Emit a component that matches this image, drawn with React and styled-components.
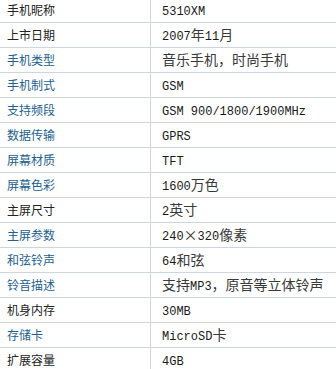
import React from "react";
import styled, { createGlobalStyle } from "styled-components";

const GlobalStyle = createGlobalStyle`
  html, body {
    margin: 0;
    padding: 0;
    background: #ffffff;
  }
  body {
    font-family: "Noto Sans CJK SC", "Liberation Sans", sans-serif;
    overflow: hidden;
  }
`;

const specs = [
  { label: "手机昵称", value: "5310XM", link: false },
  { label: "上市日期", value: "2007年11月", link: false },
  { label: "手机类型", value: "音乐手机，时尚手机", link: true },
  { label: "手机制式", value: "GSM", link: true },
  { label: "支持频段", value: "GSM 900/1800/1900MHz", link: true },
  { label: "数据传输", value: "GPRS", link: true },
  { label: "屏幕材质", value: "TFT", link: true },
  { label: "屏幕色彩", value: "1600万色", link: true },
  { label: "主屏尺寸", value: "2英寸", link: false },
  { label: "主屏参数", value: "240×320像素", link: true },
  { label: "和弦铃声", value: "64和弦", link: true },
  { label: "铃音描述", value: "支持MP3，原音等立体铃声", link: true },
  { label: "机身内存", value: "30MB", link: false },
  { label: "存储卡", value: "MicroSD卡", link: true },
  { label: "扩展容量", value: "4GB", link: false },
];

// split a value into ascii runs and the rest, so latin text gets the narrow mono face
function splitRuns(text) {
  return text.match(/[\x20-\x7e]+|[^\x20-\x7e]+/g) || [];
}

function Value({ text }) {
  return (
    <ValueCell>
      {splitRuns(text).map((run, id) =>
        /^[\x20-\x7e]+$/.test(run) ? (
          <Latin key={id}>{run}</Latin>
        ) : (
          <span key={id}>{run}</span>
        )
      )}
    </ValueCell>
  );
}

function App() {
  return (
    <>
      <GlobalStyle />
      <SpecTable>
        {specs.map((row, id) => (
          <Row key={id}>
            <Label $link={row.link}>{row.label}</Label>
            <Value text={row.value} />
          </Row>
        ))}
      </SpecTable>
    </>
  );
}

export default App;

const SpecTable = styled.div`
  margin-top: -3px;
  width: 100%;
  border-top: 1px solid #cdd6df;
`;

const Row = styled.div`
  display: grid;
  grid-template-columns: 151px 1fr;
  height: 25px;
  box-sizing: border-box;
  border-bottom: 1px solid #cdd6df;
`;

const Label = styled.div`
  padding-left: 7px;
  border-right: 1px solid #cdd6df;
  font-size: 12px;
  line-height: 23px;
  color: ${(p) => (p.$link ? "#22618f" : "#222222")};
`;

const ValueCell = styled.div`
  padding-left: 11px;
  font-size: 14px;
  line-height: 23px;
  color: #3a3a3a;
  white-space: pre;
`;

const Latin = styled.span`
  font-family: "Liberation Mono", monospace;
  font-size: 12px;
  color: #1a1a1a;
`;
